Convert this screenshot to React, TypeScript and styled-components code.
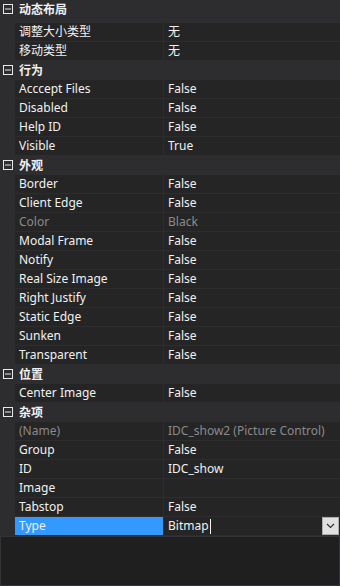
import React from 'react';
import styled, { createGlobalStyle } from 'styled-components';

const GlobalStyle = createGlobalStyle`
  html, body {
    margin: 0;
    padding: 0;
    background: #252526;
  }
  body {
    font-family: "Noto Sans", "Noto Sans CJK SC", sans-serif;
    font-size: 12px;
  }
`;

const Grid = styled.div`
  width: 340px;
  height: 586px;
  display: flex;
  flex-direction: column;
  background: #2d2d30;
  overflow: hidden;
`;

const Rows = styled.div`
  display: flex;
  flex-direction: column;
`;

const CategoryRow = styled.div<{ $first?: boolean }>`
  height: ${(p) => (p.$first ? '22px' : '19px')};
  padding-bottom: ${(p) => (p.$first ? '3px' : '0')};
  box-sizing: border-box;
  display: flex;
  align-items: center;
  background: #2d2d30;
  color: #f1f1f1;
  font-weight: bold;
  margin-bottom: ${(p) => (p.$first ? '1px' : '0')};
`;

const Toggle = styled.svg`
  width: 15px;
  height: 19px;
  flex: none;
`;

const CategoryLabel = styled.span`
  padding-left: 4px;
  line-height: 19px;
`;

const PropRow = styled.div`
  height: 19px;
  display: grid;
  grid-template-columns: 15px 148px 1px 1fr;
`;

const Gutter = styled.div`
  background: #2d2d30;
`;

const Cell = styled.div<{ $selected?: boolean; $muted?: boolean }>`
  height: 18px;
  border-bottom: 1px solid #2d2d30;
  background: ${(p) => (p.$selected ? '#3399ff' : '#252526')};
  color: ${(p) => (p.$muted ? '#8a8a8a' : '#f1f1f1')};
  padding-left: 4px;
  line-height: 18px;
  white-space: nowrap;
  overflow: hidden;
  display: flex;
  align-items: center;
`;

const Divider = styled.div`
  background: #2d2d30;
`;

const Caret = styled.span`
  display: inline-block;
  width: 1px;
  height: 15px;
  background: #f1f1f1;
  margin-left: 1px;
`;

const DropButton = styled.div`
  margin-left: auto;
  width: 15px;
  height: 16px;
  background: #e1e1e1;
  border: 1px solid #adadad;
  display: flex;
  align-items: center;
  justify-content: center;
  margin-right: 1px;
`;

const Description = styled.div`
  flex: 1;
  background: #1f1f1f;
  border: 1px solid #333337;
`;

type Prop = { name: string; value: string; muted?: boolean };
type Category = { title: string; props: Prop[] };

const data: Category[] = [
  {
    title: '动态布局',
    props: [
      { name: '调整大小类型', value: '无' },
      { name: '移动类型', value: '无' },
    ],
  },
  {
    title: '行为',
    props: [
      { name: 'Acccept Files', value: 'False' },
      { name: 'Disabled', value: 'False' },
      { name: 'Help ID', value: 'False' },
      { name: 'Visible', value: 'True' },
    ],
  },
  {
    title: '外观',
    props: [
      { name: 'Border', value: 'False' },
      { name: 'Client Edge', value: 'False' },
      { name: 'Color', value: 'Black', muted: true },
      { name: 'Modal Frame', value: 'False' },
      { name: 'Notify', value: 'False' },
      { name: 'Real Size Image', value: 'False' },
      { name: 'Right Justify', value: 'False' },
      { name: 'Static Edge', value: 'False' },
      { name: 'Sunken', value: 'False' },
      { name: 'Transparent', value: 'False' },
    ],
  },
  {
    title: '位置',
    props: [{ name: 'Center Image', value: 'False' }],
  },
  {
    title: '杂项',
    props: [
      { name: '(Name)', value: 'IDC_show2 (Picture Control)', muted: true },
      { name: 'Group', value: 'False' },
      { name: 'ID', value: 'IDC_show' },
      { name: 'Image', value: '' },
      { name: 'Tabstop', value: 'False' },
    ],
  },
];

const MinusBox = () => (
  <Toggle viewBox="0 0 15 19">
    <rect x="3.5" y="4.5" width="9" height="9" fill="none" stroke="#e8e8e8" />
    <line x1="5" y1="9" x2="11" y2="9" stroke="#e8e8e8" />
  </Toggle>
);

const Chevron = () => (
  <svg width="9" height="6" viewBox="0 0 9 6">
    <path d="M1 1 L4.5 4.5 L8 1" fill="none" stroke="#333" strokeWidth="1.2" />
  </svg>
);

export default function App() {
  return (
    <>
      <GlobalStyle />
      <Grid>
        <Rows>
          {data.map((cat, i) => (
            <React.Fragment key={cat.title}>
              <CategoryRow $first={i === 0}>
                <MinusBox />
                <CategoryLabel>{cat.title}</CategoryLabel>
              </CategoryRow>
              {cat.props.map((p) => (
                <PropRow key={p.name}>
                  <Gutter />
                  <Cell $muted={p.muted}>{p.name}</Cell>
                  <Divider />
                  <Cell $muted={p.muted}>{p.value}</Cell>
                </PropRow>
              ))}
            </React.Fragment>
          ))}
          <PropRow>
            <Gutter />
            <Cell $selected>Type</Cell>
            <Divider />
            <Cell>
              Bitmap
              <Caret />
              <DropButton>
                <Chevron />
              </DropButton>
            </Cell>
          </PropRow>
        </Rows>
        <Description />
      </Grid>
    </>
  );
}
